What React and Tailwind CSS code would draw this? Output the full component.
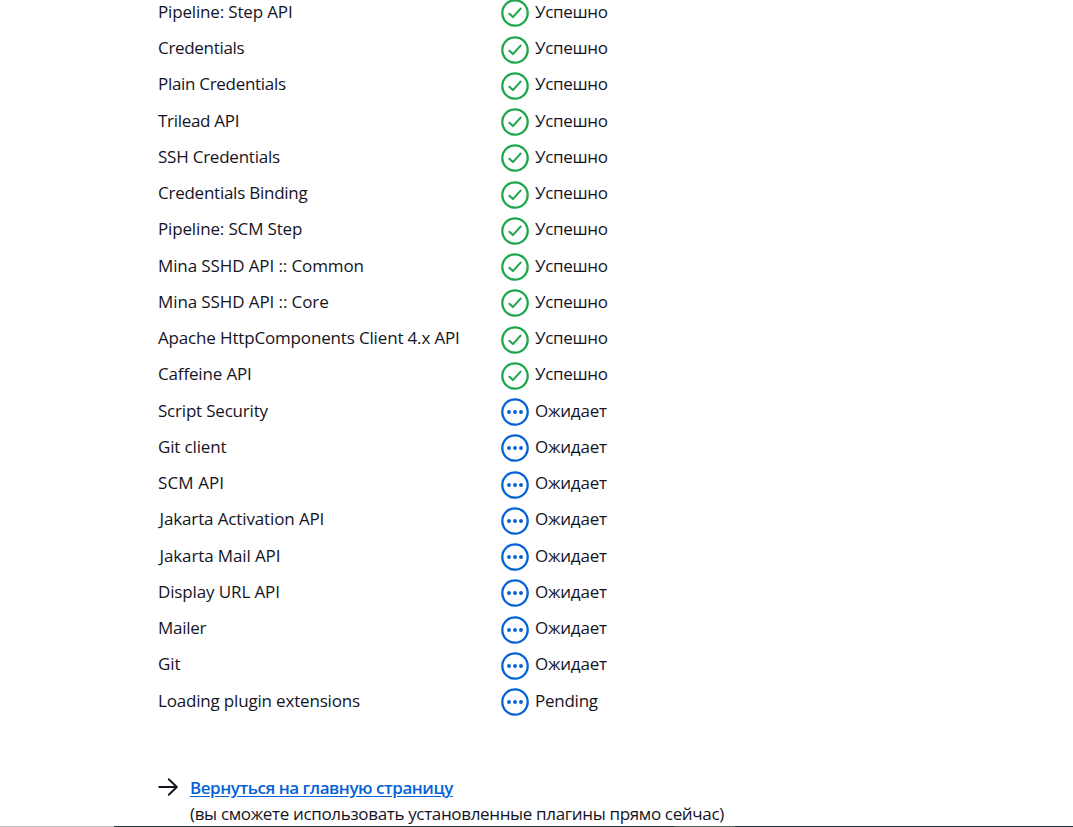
const rows = [
  ['Pipeline: Step API', 'ok', 'tracking-[-0.16px]'],
  ['Credentials', 'ok', 'tracking-[-0.31px]'],
  ['Plain Credentials', 'ok', 'tracking-[-0.3px]'],
  ['Trilead API', 'ok', 'tracking-[-0.3px]'],
  ['SSH Credentials', 'ok', 'tracking-[-0.23px]'],
  ['Credentials Binding', 'ok', 'tracking-[-0.25px]'],
  ['Pipeline: SCM Step', 'ok', 'tracking-[-0.15px]'],
  ['Mina SSHD API :: Common', 'ok', 'tracking-[-0.11px]'],
  ['Mina SSHD API :: Core', 'ok', 'tracking-[-0.1px]'],
  ['Apache HttpComponents Client 4.x API', 'ok', 'tracking-[-0.16px]'],
  ['Caffeine API', 'ok', 'tracking-[-0.16px]'],
  ['Script Security', 'wait', 'tracking-[-0.2px]'],
  ['Git client', 'wait', 'tracking-[-0.15px]'],
  ['SCM API', 'wait', 'tracking-[0.1px]'],
  ['Jakarta Activation API', 'wait', 'pl-[1.5px] tracking-[-0.13px]'],
  ['Jakarta Mail API', 'wait', 'pl-[1.5px] tracking-[-0.12px]'],
  ['Display URL API', 'wait', 'tracking-[-0.13px]'],
  ['Mailer', 'wait', 'tracking-[-0.25px]'],
  ['Git', 'wait', 'tracking-[-0.1px]'],
  ['Loading plugin extensions', 'pending', 'tracking-[-0.18px]'],
];
const labels = {
  ok: ['Успешно', 'tracking-[-0.33px]'],
  wait: ['Ожидает', 'tracking-[-0.22px]'],
  pending: ['Pending', 'tracking-[-0.25px]'],
};

function StatusIcon({ status }) {
  return status === 'ok' ? (
    <svg viewBox="0 0 28 28" className="mt-[0.7px] size-7 shrink-0 text-[#1ea64b]" fill="none" stroke="currentColor" strokeWidth="2.3" strokeLinecap="round" strokeLinejoin="round">
      <circle cx="14" cy="14" r="12.7" />
      <path d="M8.4 14.8 11.9 18.1 19.6 9.6" strokeWidth="2.1" />
    </svg>
  ) : (
    <svg viewBox="0 0 28 28" className="mt-[0.7px] size-7 shrink-0 text-[#0562d6]" fill="currentColor">
      <circle cx="14" cy="14" r="12.7" fill="none" stroke="currentColor" strokeWidth="2.3" />
      <circle cx="8" cy="14" r="1.95" />
      <circle cx="14" cy="14" r="1.95" />
      <circle cx="20" cy="14" r="1.95" />
    </svg>
  );
}

export default function App() {
  return (
    <main className="flex h-[827px] w-[1073px] flex-col overflow-hidden bg-white font-['Open_Sans','Noto_Sans',sans-serif] text-[17px] leading-6 text-[#14141f]">
      <div className="-mt-[5px] pl-[158px]">
        {rows.map(([name, status, fit]) => (
          <div key={name} className="flex h-[36.26px] items-center">
            <span className={`w-[343px] shrink-0 whitespace-nowrap pb-[2.7px] ${fit}`}>{name}</span>
            <StatusIcon status={status} />
            <span className={`ml-1.5 whitespace-nowrap pb-[2.7px] ${labels[status][1]}`}>{labels[status][0]}</span>
          </div>
        ))}
      </div>
      <div className="mt-[55px] flex min-h-0 flex-1 pl-[158px]">
        <svg viewBox="0 0 20 18" className="mt-[3px] h-[18px] w-5 shrink-0" fill="none" stroke="currentColor" strokeWidth="1.9" strokeLinecap="round" strokeLinejoin="round">
          <path d="M1.2 9H18.5M10.8 1.2 18.8 9 10.8 16.8" />
        </svg>
        <div className="ml-3 whitespace-nowrap leading-[26px]">
          <a href="#" className="font-semibold tracking-[-0.46px] text-[#0562d6] underline underline-offset-2">Вернуться на главную страницу</a>
          <div className="tracking-[-0.34px]">(вы сможете использовать установленные плагины прямо сейчас)</div>
        </div>
      </div>
      <div className="flex h-px shrink-0">
        <div className="w-[114px] bg-[#bcbcbc]" />
        <div className="w-[560px] bg-[#213339]" />
        <div className="w-[61px] bg-[#4c5c5f]" />
        <div className="flex-1 bg-[#1d2b3a]" />
      </div>
    </main>
  );
}
